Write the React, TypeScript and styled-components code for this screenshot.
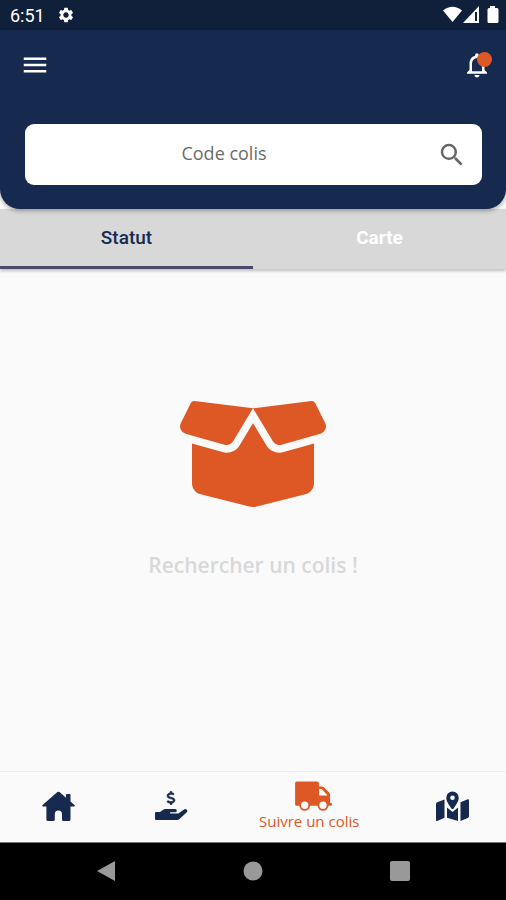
import React, { useState } from "react";
import styled, { createGlobalStyle } from "styled-components";
import { MdMenu, MdNotificationsNone, MdSearch, MdSettings } from "react-icons/md";
import { FaBoxOpen, FaDollarSign } from "react-icons/fa6";

const navy = "#16294f";
const orange = "#de5826";
const humanist = `"Open Sans", "Noto Sans", sans-serif`;

const GlobalStyle = createGlobalStyle`
  * { box-sizing: border-box; }
  body { margin: 0; background: #fafafa; font-family: Roboto, sans-serif; }
  button { padding: 0; border: 0; background: none; font: inherit; color: inherit; cursor: pointer; }
  svg { display: block; }
`;

const Screen = styled.div`
  min-height: 100vh;
  display: flex;
  flex-direction: column;
  background: #fafafa;
`;

const StatusBar = styled.div`
  height: 30px;
  padding: 0 6px 0 10px;
  display: flex;
  align-items: center;
  gap: 12px;
  background: #101f3a;
  color: #fff;
`;

const Clock = styled.time`
  font-size: 18px;
  line-height: 30px;
  padding-top: 2px;
`;

const StatusIcons = styled.div`
  margin-left: auto;
  display: flex;
  align-items: center;
`;

const Header = styled.header`
  position: relative;
  padding: 12px 24px 24px;
  background: ${navy};
  border-radius: 0 0 20px 20px;
  box-shadow: 0 2px 4px rgba(0, 0, 0, 0.3);
`;

const AppBar = styled.div`
  display: flex;
  justify-content: space-between;
  align-items: center;
  height: 46px;
  margin: 0 -4px;
  color: #fff;
`;

const IconButton = styled.button`
  position: relative;
  width: 30px;
  height: 30px;
`;

const BellButton = styled(IconButton)`
  margin-right: -6px;
`;

const Badge = styled.span`
  position: absolute;
  top: 2px;
  right: 0;
  width: 15px;
  height: 15px;
  border-radius: 50%;
  background: ${orange};
`;

const SearchBox = styled.form`
  display: flex;
  align-items: center;
  height: 61px;
  margin: 36px 0 0 1px;
  padding: 0 15px 0 0;
  background: #fff;
  border-radius: 9px;
  color: #666;
`;

const SearchInput = styled.input`
  flex: 1;
  min-width: 0;
  height: 100%;
  padding: 0 22px 4px 8px;
  border: 0;
  outline: 0;
  background: transparent;
  text-align: center;
  font: 18px ${humanist};
  color: #333;
  &::placeholder { color: #6b6b6b; opacity: 1; }
`;

const Tabs = styled.div`
  display: grid;
  grid-template-columns: 1fr 1fr;
  background: #d8d8d8;
  box-shadow: 0 2px 3px rgba(0, 0, 0, 0.24);
`;

const Tab = styled.button<{ $active: boolean }>`
  height: 60px;
  border-bottom: 3px solid ${(p) => (p.$active ? "#4b4a6c" : "transparent")};
  font-size: 19px;
  font-weight: ${(p) => (p.$active ? 500 : 700)};
  color: ${(p) => (p.$active ? navy : "#fff")};
`;

const Content = styled.main`
  flex: 1;
  display: flex;
  flex-direction: column;
  align-items: center;
  padding-top: 124px;
`;

const BoxIcon = styled(FaBoxOpen)`
  width: 154px;
  height: 122px;
  color: ${orange};
`;

const Message = styled.p`
  margin: 34px 0 0;
  font: 600 21px/32px ${humanist};
  color: #d8d8d8;
`;

const BottomNav = styled.nav`
  display: flex;
  height: 71px;
  border-top: 1px solid #eeeeee;
`;

const NavItem = styled.button<{ $active?: boolean }>`
  flex: ${(p) => (p.$active ? 3 : 2)} 1 0;
  display: flex;
  flex-direction: column;
  align-items: center;
  justify-content: center;
  padding-bottom: 3px;
  color: ${(p) => (p.$active ? orange : navy)};
`;

const NavIcon = styled.span`
  display: flex;
  width: 28px;
  height: 30px;
  svg {
    flex: none;
  }
`;

const NavLabel = styled.span`
  font: 15px/20px ${humanist};
  white-space: nowrap;
`;

const SystemNav = styled.div`
  display: grid;
  grid-template-columns: repeat(3, 1fr);
  height: 58px;
  padding: 0 33px 2px;
  background: #000;
  border-top: 1px solid #777;
`;

const SystemButton = styled.button`
  display: grid;
  place-items: center;
`;

const HouseIcon = () => (
  <svg width="33" height="30" viewBox="0 0 33 30" fill="currentColor" aria-hidden="true">
    <path d="M15.400 1.100a1.600 1.600 0 0 1 2.100 0L24 6.700V4a1 1 0 0 1 1-1h2.500a1 1 0 0 1 1 1v6.600l3.900 3.400a.9.900 0 0 1-.6 1.600h-3.300v12.800a1.600 1.600 0 0 1-1.600 1.600h-5.300a1.600 1.600 0 0 1-1.600-1.600V23a3.600 3.600 0 0 0-7.200 0v5.400a1.600 1.600 0 0 1-1.600 1.600H6a1.600 1.600 0 0 1-1.600-1.600V15.600H1.200A.9.900 0 0 1 .6 14Z" />
  </svg>
);

const HandIcon = () => (
  <svg width="33" height="30" viewBox="0 0 33 30" fill="currentColor" aria-hidden="true">
    <FaDollarSign x="9" y="0" size={14} strokeWidth={20} stroke="currentColor" />
    <path d="M1 21h4l3.200-2.200a4 4 0 0 1 2.300-.7h9.700a1.500 1.500 0 0 1 0 3.200h-5.100v1.200h7.200a3 3 0 0 0 1.800-.6l5.300-3.600a1.900 1.900 0 0 1 2.400 2.900l-7.600 7a3 3 0 0 1-2 .8H1a1 1 0 0 1-1-1v-6a1 1 0 0 1 1-1Z" />
  </svg>
);

const TruckIcon = () => (
  <svg width="38" height="30" viewBox="0 0 38 30" fill="currentColor" aria-hidden="true">
    <path
      fillRule="evenodd"
      d="M1.800 0.500h20.400a1.700 1.700 0 0 1 1.700 1.700V5.500h3.200a3 3 0 0 1 2.100.9l5 5a3 3 0 0 1 .9 2.100v8.500h1a.9.900 0 0 1 .9.900v.7a1.200 1.200 0 0 1-1.200 1.200H1.800A1.700 1.700 0 0 1 .1 23V2.200A1.700 1.700 0 0 1 1.800.5ZM24 8v6.500h8v-.700L26.600 8Z"
    />
    <g stroke="currentColor" strokeWidth="1.800" fill="#fafafa">
      <circle cx="9.700" cy="24.300" r="4.600" />
      <circle cx="28" cy="24.300" r="4.600" />
    </g>
  </svg>
);

const MapIcon = () => (
  <svg width="33" height="30" viewBox="0 0 33 30" fill="currentColor" aria-hidden="true">
    <path d="M1.200 11.200 8.500 8.500v18.300L1.200 29.900A.9.900 0 0 1 0 29V12.900a1.900 1.900 0 0 1 1.200-1.700Z" />
    <path d="M11 16.500 16.500 21l5.500-4.500v13.400l-11-3.100Z" />
    <path d="m24.500 11.200 7.300-2.900A.9.900 0 0 1 33 9.200v16.100a1.900 1.900 0 0 1-1.200 1.700l-7.300 2.900Z" />
    <path
      fillRule="evenodd"
      stroke="#fafafa"
      strokeWidth="2"
      paintOrder="stroke"
      d="M16.500.500a6.200 6.200 0 0 1 6.200 6.200c0 4-3 7.400-5.100 10.800a1.300 1.300 0 0 1-2.200 0C13.300 14.100 10.300 10.700 10.300 6.700A6.200 6.200 0 0 1 16.500.5Zm0 3.900a2.300 2.300 0 1 0 0 4.600 2.300 2.300 0 0 0 0-4.600Z"
    />
  </svg>
);

export default function App() {
  const [tab, setTab] = useState("Statut");
  return (
    <Screen>
      <GlobalStyle />
      <StatusBar>
        <Clock>6:51</Clock>
        <MdSettings size={18} />
        <StatusIcons>
          <svg width="57" height="18" viewBox="0 0 57 18" fill="#fff" aria-hidden="true">
            <path d="M0 4.500Q9.500-3 19 4.500L9.500 16Z" />
            <path d="M36 0v17H20Z" />
            <path d="M32 6h2v9h-2z" fill="#101f3a" />
            <path d="M47 0h5v2h2a1.500 1.500 0 0 1 1.500 1.500v12a1.500 1.500 0 0 1-1.500 1.500h-8a1.500 1.500 0 0 1-1.500-1.500v-12A1.500 1.500 0 0 1 46 2h1z" />
          </svg>
        </StatusIcons>
      </StatusBar>
      <Header>
        <AppBar>
          <IconButton aria-label="Menu">
            <MdMenu size={30} />
          </IconButton>
          <BellButton aria-label="Notifications">
            <MdNotificationsNone size={30} />
            <Badge />
          </BellButton>
        </AppBar>
        <SearchBox onSubmit={(e) => e.preventDefault()}>
          <SearchInput aria-label="Code colis" placeholder="Code colis" />
          <IconButton type="submit" aria-label="Rechercher">
            <MdSearch size={30} />
          </IconButton>
        </SearchBox>
      </Header>
      <Tabs role="tablist">
        {["Statut", "Carte"].map((name) => (
          <Tab
            key={name}
            role="tab"
            aria-selected={tab === name}
            $active={tab === name}
            onClick={() => setTab(name)}
          >
            {name}
          </Tab>
        ))}
      </Tabs>
      <Content>
        <BoxIcon aria-hidden="true" />
        <Message>Rechercher un colis !</Message>
      </Content>
      <BottomNav>
        <NavItem aria-label="Accueil">
          <NavIcon>
            <HouseIcon />
          </NavIcon>
        </NavItem>
        <NavItem aria-label="Paiements">
          <NavIcon>
            <HandIcon />
          </NavIcon>
        </NavItem>
        <NavItem $active>
          <NavIcon>
            <TruckIcon />
          </NavIcon>
          <NavLabel>Suivre un colis</NavLabel>
        </NavItem>
        <NavItem aria-label="Carte">
          <NavIcon>
            <MapIcon />
          </NavIcon>
        </NavItem>
      </BottomNav>
      <SystemNav>
        <SystemButton aria-label="Retour">
          <svg width="20" height="22" viewBox="0 0 20 22" fill="#999">
            <path d="M19 1v20L1 11Z" />
          </svg>
        </SystemButton>
        <SystemButton aria-label="Écran d'accueil">
          <svg width="20" height="20" viewBox="0 0 20 20" fill="#999">
            <circle cx="10" cy="10" r="9.500" />
          </svg>
        </SystemButton>
        <SystemButton aria-label="Applications récentes">
          <svg width="20" height="20" viewBox="0 0 20 20" fill="#999">
            <rect width="20" height="20" rx="2" />
          </svg>
        </SystemButton>
      </SystemNav>
    </Screen>
  );
}
